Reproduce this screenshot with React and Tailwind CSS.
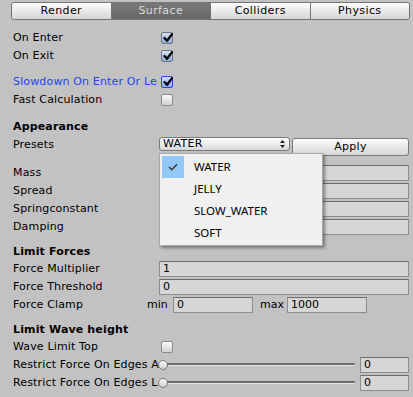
import React from "react";

const font = { fontFamily: '"DejaVu Sans", Verdana, sans-serif' };

const Check = () => (
  <svg width="10" height="10" viewBox="0 0 10 10" className="absolute left-[1px] top-0">
    <path d="M1.5 5 L4 7.8 L9 1.2" fill="none" stroke="#000" strokeWidth="2.3" strokeLinecap="round" strokeLinejoin="round" />
  </svg>
);

const Checkbox = ({ checked, focus }) => (
  <div
    className={`relative w-[12px] h-[12px] rounded-[2px] border ${
      focus ? "border-[#2848d8]" : checked ? "border-[#6c7686]" : "border-[#8a8a8a]"
    } ${
      checked
        ? "bg-gradient-to-b from-[#d6e2f2] to-[#8eaad2]"
        : "bg-gradient-to-b from-[#fbfbfb] to-[#d2d2d2]"
    }`}
  >
    {checked && <Check />}
  </div>
);

const Field = ({ value = "", className = "" }) => (
  <div
    className={`h-[16px] border border-[#8e8e8e] border-t-[#6c6c6c] bg-[#d6d6d6] pl-[3px] text-[11px] leading-[14px] text-black ${className}`}
  >
    {value}
  </div>
);

const Label = ({ children, blue, w = "w-[146px]", clip = true }) => (
  <div
    className={`${w} shrink-0 ${clip ? "overflow-hidden" : ""} whitespace-nowrap text-[11px] tracking-[0.15px] ${
      blue ? "text-[#2545e6]" : "text-black"
    }`}
  >
    {children}
  </div>
);

const Row = ({ children, className = "" }) => (
  <div className={`flex h-[18px] items-center pl-[13px] pr-[4px] ${className}`}>{children}</div>
);

const Header = ({ children, className = "" }) => (
  <div className={`flex items-center pl-[13px] text-[11px] font-bold tracking-[0.15px] text-black ${className}`}>
    {children}
  </div>
);

const Slider = ({ label }) => (
  <Row>
    <Label w="w-[145px]" clip={false}>{label}</Label>
    <div className="relative h-[18px] w-[197px]">
      <div className="absolute left-[2px] right-0 top-[7px] h-[3px] rounded-full bg-[#6a6a6a] border-b border-[#e6e6e6]" />
      <div className="absolute left-0 top-[4px] w-[10px] h-[10px] rounded-full border border-[#7a7a7a] bg-gradient-to-b from-[#fafafa] to-[#cfcfcf]" />
    </div>
    <Field value="0" className="ml-[5px] w-[49px]" />
  </Row>
);

const tabs = ["Render", "Surface", "Colliders", "Physics"];

export default function App() {
  return (
    <div className="relative w-[413px] h-[397px] overflow-hidden bg-[#c2c2c2]" style={font}>
      <div className="pt-[2px] pl-[11px]">
        <div className="flex w-[399px] h-[18px] rounded-[3px] border border-[#747474] overflow-hidden">
          {tabs.map((t, i) => (
            <div
              key={t}
              className={`flex-1 flex items-center justify-center text-[11px] tracking-[0.4px] ${
                i > 0 ? "border-l border-[#747474]" : ""
              } ${
                t === "Surface"
                  ? "bg-gradient-to-b from-[#7a7a7a] to-[#666666] text-[#dadada]"
                  : "bg-gradient-to-b from-[#fdfdfd] to-[#d6d6d6] text-black"
              }`}
            >
              {t}
            </div>
          ))}
        </div>
      </div>

      <Row className="mt-[9px]">
        <Label>On Enter</Label>
        <div className="ml-[2px]"><Checkbox checked /></div>
      </Row>
      <Row>
        <Label>On Exit</Label>
        <div className="ml-[2px]"><Checkbox checked /></div>
      </Row>
      <Row className="mt-[8px]">
        <Label blue w="w-[145px]">Slowdown On Enter Or Leave</Label>
        <div className="ml-[3px]"><Checkbox checked focus /></div>
      </Row>
      <Row>
        <Label>Fast Calculation</Label>
        <div className="ml-[2px]"><Checkbox /></div>
      </Row>

      <Header className="mt-[9px] h-[18px]">Appearance</Header>
      <div className="flex h-[20px] items-start pl-[13px] pr-[4px]">
        <div className="w-[146px] shrink-0 text-[11px] leading-[18px] tracking-[0.15px] text-black">Presets</div>
        <div className="mt-[1px] flex h-[14px] w-[131px] items-center justify-between rounded-[3px] border border-[#7a7a7a] bg-gradient-to-b from-[#fdfdfd] to-[#d8d8d8] pl-[3px] pr-[4px] text-[11px] tracking-[0.3px] text-black">
          <span>WATER</span>
          <svg width="5" height="8" viewBox="0 0 5 8">
            <path d="M2.5 0 L5 3 L0 3 Z M0 5 L5 5 L2.5 8 Z" fill="#222" />
          </svg>
        </div>
        <div className="ml-[2px] mt-[2px] flex h-[18px] flex-1 items-center justify-center rounded-[3px] border border-[#7a7a7a] bg-gradient-to-b from-[#fdfdfd] to-[#d6d6d6] text-[11px] tracking-[0.3px] text-black">
          Apply
        </div>
      </div>

      <Row className="mt-[8px]">
        <Label>Mass</Label>
        <Field className="flex-1" />
      </Row>
      <Row>
        <Label>Spread</Label>
        <Field className="flex-1" />
      </Row>
      <Row>
        <Label>Springconstant</Label>
        <Field className="flex-1" />
      </Row>
      <Row>
        <Label>Damping</Label>
        <Field className="flex-1" />
      </Row>

      <Header className="mt-[8px] h-[16px]">Limit Forces</Header>
      <Row>
        <Label>Force Multiplier</Label>
        <Field value="1" className="flex-1" />
      </Row>
      <Row>
        <Label>Force Threshold</Label>
        <Field value="0" className="flex-1" />
      </Row>
      <Row>
        <Label w="w-[134px]">Force Clamp</Label>
        <div className="w-[26px] shrink-0 text-[11px] text-black">min</div>
        <Field value="0" className="w-[80px]" />
        <div className="ml-[7px] w-[27px] shrink-0 text-[11px] text-black">max</div>
        <Field value="1000" className="w-[80px]" />
      </Row>

      <Header className="mt-[8px] h-[16px]">Limit Wave height</Header>
      <Row>
        <Label>Wave Limit Top</Label>
        <div className="ml-[2px]"><Checkbox /></div>
      </Row>
      <Slider label="Restrict Force On Edges A" />
      <Slider label="Restrict Force On Edges L" />

      <div
        className="absolute left-[159px] top-[153px] w-[164px] border border-[#a8a8a8] bg-[#f0f0f0] pt-[2px] pb-[1px] pl-[2px] shadow-[2px_2px_3px_rgba(0,0,0,0.4)]"
        style={{ fontFamily: '"Noto Sans", "Open Sans", sans-serif' }}
      >
        {["WATER", "JELLY", "SLOW_WATER", "SOFT"].map((item, i) => (
          <div key={item} className="flex h-[22px] items-center">
            <div
              className={`flex h-[22px] w-[22px] items-center justify-center ${
                i === 0 ? "bg-[#93c8f6]" : ""
              }`}
            >
              {i === 0 && (
                <svg width="10" height="8" viewBox="0 0 10 8">
                  <path d="M1 4 L3.8 6.8 L9 1.2" fill="none" stroke="#333" strokeWidth="1.4" />
                </svg>
              )}
            </div>
            <div className="ml-[10px] text-[11.5px] text-black">{item}</div>
          </div>
        ))}
      </div>
    </div>
  );
}
